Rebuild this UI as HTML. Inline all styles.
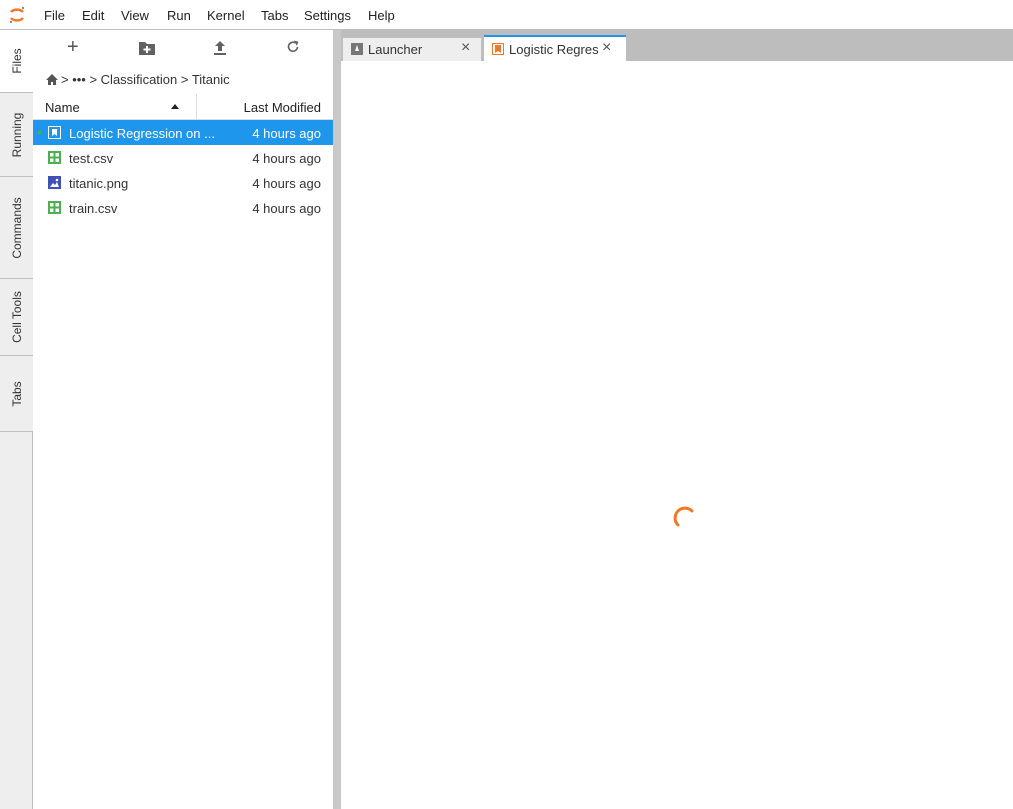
<!DOCTYPE html>
<html><head><style>
*{box-sizing:border-box;margin:0;padding:0}
body{width:1013px;height:809px;position:relative;overflow:hidden;background:#fff;font-family:"Liberation Sans",sans-serif;font-size:13px;color:#333}
.abs{position:absolute}
#menu{left:0;top:0;width:1013px;height:30px;border-bottom:1px solid #c0c0c0;background:#fff}
#menu span{position:absolute;top:8px;font-size:13px;color:#222}
#side{left:0;top:30px;width:33px;height:779px;background:#eee;border-right:1px solid #c0c0c0}
.st{position:absolute;left:0;width:33px;border-bottom:1px solid #c0c0c0;background:#eee}
.st span{position:absolute;left:50%;top:50%;transform:translate(-50%,-50%) rotate(-90deg);white-space:nowrap;font-size:12px;color:#333}
#panel{left:33px;top:30px;width:300px;height:779px;background:#fff}
#split{left:333px;top:30px;width:8px;height:779px;background:#c8c8c8}
#tabbar{left:341px;top:30px;width:672px;height:31px;background:#bdbdbd}
.tab{position:absolute;top:7px;height:24px;font-size:13px}
.row{position:absolute;left:0;width:300px;height:25px;font-size:13px}
.row .n{position:absolute;left:36px;top:6px}
.row .d{position:absolute;right:12px;top:6px}
.row .i{position:absolute;left:15px;top:6px;width:13px;height:13px}
</style></head><body>
<div id="menu" class="abs">
<svg class="abs" style="left:8px;top:5px" width="18" height="20" viewBox="0 0 18 20"><path d="M3 7 A7 5 0 0 1 15 7" stroke="#f37726" stroke-width="2.5" fill="none"/><path d="M3 13 A7 5 0 0 0 15 13" stroke="#f37726" stroke-width="2.5" fill="none"/><circle cx="15" cy="3" r="1" fill="#666"/><circle cx="3" cy="17" r="1" fill="#666"/></svg>
<span style="left:44px">File</span><span style="left:82px">Edit</span><span style="left:121px">View</span><span style="left:167px">Run</span><span style="left:207px">Kernel</span><span style="left:261px">Tabs</span><span style="left:304px">Settings</span><span style="left:368px">Help</span>
</div>
<div id="side" class="abs">
<div class="st" style="top:0;height:63px;background:#fff;width:34px"><span>Files</span></div>
<div class="st" style="top:63px;height:84px"><span>Running</span></div>
<div class="st" style="top:147px;height:102px"><span>Commands</span></div>
<div class="st" style="top:249px;height:77px"><span>Cell Tools</span></div>
<div class="st" style="top:326px;height:76px"><span>Tabs</span></div>
</div>
<div id="panel" class="abs">
<div class="abs" style="left:34px;top:6px;font-size:20px;color:#555">+</div>
<svg class="abs" style="left:106px;top:11px" width="16" height="14"><path d="M0 1h6l2 2h8v11H0z" fill="#616161"/><path d="M8 5v7M4.5 8.5h7" stroke="#fff" stroke-width="2"/></svg>
<svg class="abs" style="left:181px;top:11px" width="12" height="14"><path d="M6 0L1 5h3v5h4V5h3z M0 12h12v2H0z" fill="#616161"/></svg>
<svg class="abs" style="left:253px;top:10px" width="14" height="14" viewBox="0 0 14 14"><path d="M11.5 7A4.5 4.5 0 1 1 9.5 3" stroke="#616161" stroke-width="1.6" fill="none"/><path d="M8 0.5l4.5 1.2-1.8 4z" fill="#616161"/></svg>
<svg class="abs" style="left:13px;top:44px" width="12" height="11"><path d="M6 0L0 6h2v5h3V8h2v3h3V6h2z" fill="#555"/></svg>
<div class="abs" style="left:28px;top:42px;font-size:13px;color:#333">&gt; ••• &gt; Classification &gt; Titanic</div>
<div class="abs" style="left:0;top:64px;width:300px;height:26px;border-bottom:1px solid #ddd">
<div class="abs" style="left:12px;top:6px;color:#222">Name</div>
<div class="abs" style="left:138px;top:10px;width:0;height:0;border-left:4px solid transparent;border-right:4px solid transparent;border-bottom:5px solid #222"></div>
<div class="abs" style="left:163px;top:0;width:1px;height:26px;background:#ddd"></div>
<div class="abs" style="right:12px;top:6px;color:#222">Last Modified</div>
</div>
<div class="row" style="top:90px;background:#1e96eb;color:#fff"><div class="abs" style="left:5px;top:11px;width:3px;height:3px;background:#4caf50"></div><svg class="i" viewBox="0 0 13 13"><rect x=".5" y=".5" width="12" height="12" fill="none" stroke="#fff"/><path d="M4 3h5v7l-2.5-2-2.5 2z" fill="#fff"/></svg><span class="n">Logistic Regression on ...</span><span class="d">4 hours ago</span></div>
<div class="row" style="top:115px"><svg class="i" viewBox="0 0 13 13"><rect x="1" y="1" width="11" height="11" fill="none" stroke="#4caf50" stroke-width="2"/><path d="M6.5 1v11M1 6.5h11" stroke="#4caf50" stroke-width="2"/></svg><span class="n">test.csv</span><span class="d">4 hours ago</span></div>
<div class="row" style="top:140px"><svg class="i" viewBox="0 0 13 13"><rect width="13" height="13" fill="#3f51b5"/><path d="M2 11l3-4 2 2 2-3 2 5z" fill="#fff"/><circle cx="9" cy="4" r="1.3" fill="#fff"/></svg><span class="n">titanic.png</span><span class="d">4 hours ago</span></div>
<div class="row" style="top:165px"><svg class="i" viewBox="0 0 13 13"><rect x="1" y="1" width="11" height="11" fill="none" stroke="#4caf50" stroke-width="2"/><path d="M6.5 1v11M1 6.5h11" stroke="#4caf50" stroke-width="2"/></svg><span class="n">train.csv</span><span class="d">4 hours ago</span></div>
</div>
<div id="split" class="abs"></div>
<div id="tabbar" class="abs">
<div class="tab" style="left:1px;width:140px;background:#eee;border:1px solid #c0c0c0;border-bottom:none">
<svg class="abs" style="left:8px;top:5px" width="12" height="12"><rect width="12" height="12" fill="#777"/><path d="M6 2l2 6H4z" fill="#fff"/></svg>
<span class="abs" style="left:25px;top:4px">Launcher</span><span class="abs" style="left:118px;top:1px;font-size:16px;color:#555">×</span></div>
<div class="tab" style="left:143px;width:142px;background:#fff;border-top:2px solid #1e96eb;top:5px;height:26px">
<svg class="abs" style="left:8px;top:6px" width="12" height="12"><rect x=".5" y=".5" width="11" height="11" fill="none" stroke="#f37726"/><path d="M3 2h6v8L6 8 3 10z" fill="#f37726"/></svg>
<span class="abs" style="left:25px;top:5px;width:90px;overflow:hidden;white-space:nowrap">Logistic Regression</span><span class="abs" style="left:118px;top:2px;font-size:16px;color:#555">×</span></div>
</div>
<svg class="abs" style="left:672px;top:503px" width="26" height="26"><path d="M6 22A9 9 0 0 1 20 8" stroke="#f37726" stroke-width="3" fill="none" stroke-linecap="round"/></svg>
</body></html>
